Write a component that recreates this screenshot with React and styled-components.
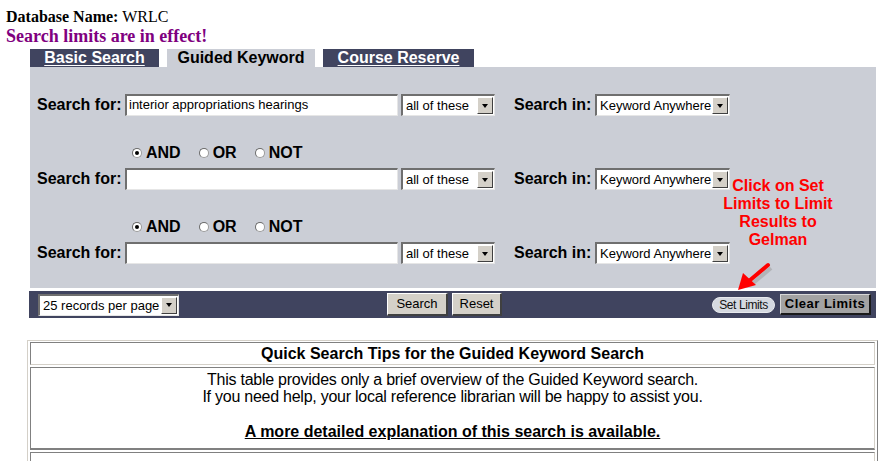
import React from 'react'
import styled, { createGlobalStyle, css } from 'styled-components'

const GlobalStyle = createGlobalStyle`
  html, body {
    margin: 0;
    padding: 0;
    background: #ffffff;
  }
  body {
    font-family: "Liberation Sans", Arial, sans-serif;
  }
`

const Page = styled.div`
  padding: 8px 0 0 6px;
  width: 884px;
  height: 461px;
  box-sizing: border-box;
  overflow: hidden;
`

const DbName = styled.div`
  font-family: "Liberation Serif", "Times New Roman", serif;
  font-size: 16px;
  line-height: 18px;
  color: #000;
  b { font-weight: bold; }
`

const LimitsNote = styled.div`
  font-family: "Liberation Serif", "Times New Roman", serif;
  font-size: 18px;
  line-height: 20px;
  font-weight: bold;
  color: #800080;
`

const FormArea = styled.div`
  position: relative;
  margin-left: 24px;
  width: 846px;
  margin-top: 3px;
`

const TabRow = styled.div`
  display: flex;
  gap: 8px;
  height: 18px;
`

const Tab = styled.div`
  height: 18px;
  box-sizing: border-box;
  font-size: 16px;
  font-weight: bold;
  line-height: 18px;
  text-align: center;
  width: ${p => p.w}px;
  background: #40445f;
  color: #ffffff;
  text-decoration: underline;
  text-underline-offset: 2px;
  ${p => p.active && css`
    background: #cbced6;
    color: #000000;
    text-decoration: none;
  `}
`

const Panel = styled.div`
  background: #cbced6;
  height: 221px;
  padding: 27px 0 0 7px;
  box-sizing: border-box;
`

const SearchRow = styled.div`
  display: flex;
  align-items: center;
  height: 22px;
`

const Label = styled.span`
  font-size: 16px;
  font-weight: bold;
  color: #000;
  width: ${p => p.w}px;
  margin-left: ${p => p.ml || 0}px;
  white-space: nowrap;
`

const TextBox = styled.div`
  width: 273px;
  height: 22px;
  box-sizing: border-box;
  background: #fff;
  border-top: 2px solid #6f6f6f;
  border-left: 2px solid #6f6f6f;
  border-bottom: 1px solid #e6e6e6;
  border-right: 1px solid #e6e6e6;
  font-size: 13px;
  line-height: 18px;
  padding-left: 2px;
  color: #000;
  white-space: nowrap;
  overflow: hidden;
`

const SelectBox = styled.div`
  width: ${p => p.w}px;
  height: 22px;
  box-sizing: border-box;
  background: #fff;
  border-top: 2px solid #6f6f6f;
  border-left: 2px solid #6f6f6f;
  border-bottom: 1px solid #e6e6e6;
  border-right: 1px solid #e6e6e6;
  margin-left: ${p => p.ml || 0}px;
  display: flex;
  align-items: center;
  justify-content: space-between;
  font-size: 13px;
  color: #000;
  padding-left: 3px;
  white-space: nowrap;
`

const DropBtn = styled.span`
  width: 16px;
  height: 17px;
  margin-right: 1px;
  background: #d4d0c8;
  box-sizing: border-box;
  border-top: 1px solid #ffffff;
  border-left: 1px solid #ffffff;
  border-right: 1px solid #404040;
  border-bottom: 1px solid #404040;
  display: flex;
  align-items: center;
  justify-content: center;
  &::after {
    content: '';
    border-left: 3.5px solid transparent;
    border-right: 3.5px solid transparent;
    border-top: 4px solid #000;
  }
`

const BoolRow = styled.div`
  display: flex;
  align-items: center;
  height: 16px;
  padding-left: 95px;
  margin: 29px 0 7px;
`

const BoolOption = styled.span`
  display: flex;
  align-items: center;
  font-size: 16px;
  font-weight: bold;
  color: #000;
  margin-right: ${p => p.mr}px;
`

const Radio = styled.span`
  width: 10px;
  height: 10px;
  border-radius: 50%;
  box-sizing: border-box;
  background: #fff;
  border: 1px solid #9a9a9a;
  border-top-color: #6a6a6a;
  border-left-color: #6a6a6a;
  margin-right: 4px;
  display: flex;
  align-items: center;
  justify-content: center;
  ${p => p.checked && css`
    &::after {
      content: '';
      width: 4px;
      height: 4px;
      border-radius: 50%;
      background: #000;
    }
  `}
`

const BottomBar = styled.div`
  margin-top: 3px;
  margin-left: -1px;
  background: #40445f;
  height: 27px;
  display: flex;
  align-items: center;
  padding-left: 9px;
  box-sizing: border-box;
`

const Button = styled.div`
  height: 23px;
  box-sizing: border-box;
  background: #d4d0c8;
  border-top: 1px solid #ffffff;
  border-left: 1px solid #ffffff;
  border-right: 2px solid #404040;
  border-bottom: 2px solid #404040;
  font-size: 13px;
  line-height: 20px;
  text-align: center;
  color: #000;
  width: ${p => p.w}px;
  margin-left: ${p => p.ml || 0}px;
`

const PillButton = styled.div`
  margin-left: ${p => p.ml}px;
  width: 63px;
  height: 16px;
  border-radius: 8px;
  background: #d5d9e0;
  border: 1px solid #e8eaee;
  box-sizing: border-box;
  font-size: 12px;
  line-height: 14px;
  text-align: center;
  color: #111;
  letter-spacing: -0.4px;
`

const ClearButton = styled.div`
  margin-left: 5px;
  width: 91px;
  height: 21px;
  box-sizing: border-box;
  background: #a3a3a3;
  border-top: 1px solid #d8d8d8;
  border-left: 1px solid #d8d8d8;
  border-right: 2px solid #1a1a1a;
  border-bottom: 2px solid #1a1a1a;
  font-size: 13px;
  font-weight: bold;
  line-height: 18px;
  text-align: center;
  color: #000;
  letter-spacing: 0.5px;
`

const Callout = styled.div`
  position: absolute;
  left: 673px;
  top: 128px;
  width: 150px;
  text-align: center;
  color: #ff0000;
  font-size: 16px;
  font-weight: bold;
  line-height: 18px;
`

const Arrow = styled.svg`
  position: absolute;
  left: 700px;
  top: 210px;
  overflow: visible;
`

const TipsTable = styled.div`
  margin: 22px 0 0 21px;
  width: 851px;
  height: 130px;
  box-sizing: border-box;
  border-top: 1px solid #d4d0c8;
  border-left: 1px solid #d4d0c8;
  border-right: 1px solid #808080;
  padding: 1px 2px 0;
  display: flex;
  flex-direction: column;
  gap: 2px;
`

const Cell = styled.div`
  box-sizing: border-box;
  border-top: 1px solid #808080;
  border-left: 1px solid #808080;
  border-bottom: 1px solid #d4d0c8;
  border-right: 1px solid #d4d0c8;
  text-align: center;
  color: #000;
  font-size: 16px;
  letter-spacing: -0.25px;
  height: ${p => p.h}px;
  flex-shrink: 0;
`

const HeaderCell = styled(Cell)`
  font-weight: bold;
  line-height: 21px;
  letter-spacing: 0;
`

const BodyCell = styled(Cell)`
  padding-top: 3px;
  line-height: 17px;
  border-bottom: 2px solid #808080;
`

const MoreLink = styled.div`
  margin-top: 18px;
  font-weight: bold;
  text-decoration: underline;
  letter-spacing: 0;
`

const DropSelect = ({ w, ml, children }) => (
  <SelectBox w={w} ml={ml}>
    <span>{children}</span>
    <DropBtn />
  </SelectBox>
)

const SearchLine = ({ value }) => (
  <SearchRow>
    <Label w={88}>Search for:</Label>
    <TextBox>{value}</TextBox>
    <DropSelect w={94} ml={3}>all of these</DropSelect>
    <Label w={81} ml={19}>Search in:</Label>
    <DropSelect w={135}>Keyword Anywhere</DropSelect>
  </SearchRow>
)

const BoolChoice = () => (
  <BoolRow>
    <BoolOption mr={18}><Radio checked />AND</BoolOption>
    <BoolOption mr={18}><Radio />OR</BoolOption>
    <BoolOption mr={0}><Radio />NOT</BoolOption>
  </BoolRow>
)

export default function App() {
  return (
    <Page>
      <GlobalStyle />
      <DbName><b>Database Name:</b> WRLC</DbName>
      <LimitsNote>Search limits are in effect!</LimitsNote>
      <FormArea>
        <TabRow>
          <Tab w={129}>Basic Search</Tab>
          <Tab w={148} active>Guided Keyword</Tab>
          <Tab w={151}>Course Reserve</Tab>
        </TabRow>
        <Panel>
          <SearchLine value="interior appropriations hearings" />
          <BoolChoice />
          <SearchLine value="" />
          <BoolChoice />
          <SearchLine value="" />
        </Panel>
        <BottomBar>
          <DropSelect w={141}>25 records per page</DropSelect>
          <Button w={61} ml={208}>Search</Button>
          <Button w={50} ml={4}>Reset</Button>
          <PillButton ml={210}>Set Limits</PillButton>
          <ClearButton>Clear Limits</ClearButton>
        </BottomBar>
        <Callout>Click on Set<br />Limits to Limit<br />Results to<br />Gelman</Callout>
        <Arrow width="40" height="34" viewBox="0 0 40 34">
          <line x1="41" y1="9" x2="22" y2="25" stroke="#9a9a9a" strokeWidth="4" opacity="0.5" />
          <line x1="38" y1="6" x2="19" y2="22" stroke="#ff0000" strokeWidth="4" strokeLinecap="round" />
          <polygon points="8,31 13,14 26,26" fill="#ff0000" />
        </Arrow>
      </FormArea>
      <TipsTable>
        <HeaderCell h={23}>Quick Search Tips for the Guided Keyword Search</HeaderCell>
        <BodyCell h={83}>
          This table provides only a brief overview of the Guided Keyword search.<br />
          If you need help, your local reference librarian will be happy to assist you.
          <MoreLink>A more detailed explanation of this search is available.</MoreLink>
        </BodyCell>
        <Cell h={20} />
      </TipsTable>
    </Page>
  )
}
